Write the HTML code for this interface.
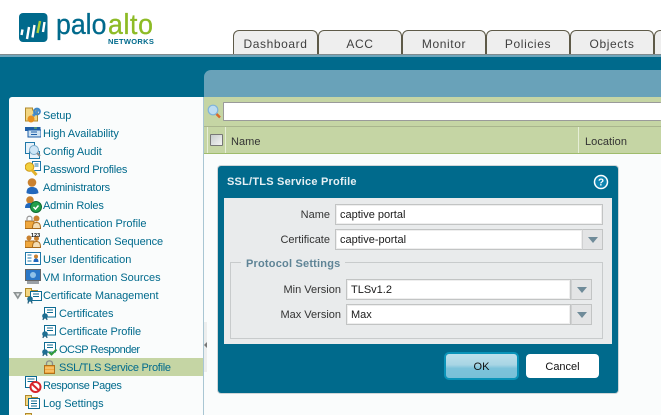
<!DOCTYPE html>
<html><head><meta charset="utf-8"><style>
html,body{margin:0;padding:0}
body{width:661px;height:415px;overflow:hidden;position:relative;background:#fff;font-family:"Liberation Sans",sans-serif}
div,span,svg{position:absolute;box-sizing:border-box}
.tab{top:30px;height:25px;width:84px;background:#eee;border:1px solid #5e5a48;border-bottom:0;border-radius:6px 6px 0 0;text-align:center;font-size:12px;line-height:27px;color:#3f3f3f;letter-spacing:.6px}
.t{font-size:11px;line-height:18px;height:18px;color:#006a8c;white-space:nowrap}
.l{font-size:11px;color:#333;text-align:right;white-space:nowrap;line-height:14px}
.in{background:#fff;border:1px solid #c2c4c4;box-shadow:inset 0 0 0 1px #eee;font-size:11px;color:#1a1a1a;padding-left:4px;white-space:nowrap}
.ar{background:#e3e4e5;border:1px solid #c2c4c4;border-left:1px solid #d0d1d2}
.ar:after{content:"";position:absolute;left:5px;top:7px;border:5px solid transparent;border-top:6px solid #6f8b99;border-bottom:0}
</style></head><body>
<!-- header -->
<svg style="left:19px;top:13px" width="29" height="30" viewBox="0 0 29 30"><rect width="28.500" height="29" rx="4" fill="#006a8c"/><g stroke-width="2.400" fill="none"><path d="M2.500 22L3.500 16.500M8 26L10 14M13.500 24.500L15.500 12" stroke="#fff"/><path d="M18.500 20L21 8" stroke="#a8cf3a"/><path d="M24 19L25.500 9" stroke="#fff"/></g></svg>
<span style="left:55.500px;top:9.500px;font-size:29px;line-height:30px;color:#006a8c;transform:scaleX(.92);transform-origin:0 0;-webkit-text-stroke:.3px #006a8c">palo</span>
<span style="left:107.500px;top:9.500px;font-size:29px;line-height:30px;color:#8dbb25;transform:scaleX(.92);transform-origin:0 0;letter-spacing:.7px;-webkit-text-stroke:.3px #8dbb25">alto</span>
<span style="left:108px;top:38px;font-size:7.500px;line-height:8px;font-weight:bold;color:#006a8c;letter-spacing:.3px">NETWORKS</span>
<div class="tab" style="left:233px;width:85px">Dashboard</div>
<div class="tab" style="left:318px">ACC</div>
<div class="tab" style="left:402px">Monitor</div>
<div class="tab" style="left:486px">Policies</div>
<div class="tab" style="left:570px">Objects</div>
<div class="tab" style="left:654px"></div>
<div style="left:0;top:54px;width:661px;height:1px;background:#7f8a8e"></div>
<div style="left:0;top:55px;width:661px;height:2px;background:#6fa5bb"></div>
<div style="left:0;top:57px;width:661px;height:358px;background:#006a8c"></div>
<!-- left panel -->
<div style="left:9px;top:97px;width:195px;height:318px;background:#fafcfc;border-radius:3px 0 0 0;border-right:1px solid #a9c6d3"></div>
<div style="left:9px;top:358px;width:194px;height:18px;background:#c5d5a4"></div>
<div style="left:204px;top:97px;width:457px;height:318px;background:#fafcfc"></div>
<div style="left:204px;top:70px;width:457px;height:27px;background:#69a2b9;border-radius:7px 0 0 0"></div>
<div style="left:204px;top:97px;width:457px;height:56px;background:#c5d5a4"></div>
<div style="left:204px;top:322px;width:3px;height:50px;background:#eceeee"></div>
<div style="left:204px;top:342px;width:0;height:0;border:3px solid transparent;border-right:3px solid #777;border-left:0"></div>
<!-- search -->
<svg style="left:207px;top:103px" width="16" height="18" viewBox="0 0 16 18"><circle cx="6" cy="7" r="4.800" fill="#bcdcf2" stroke="#7fb3da" stroke-width="1.200"/><path d="M9.500 11L13 14.500" stroke="#d9692a" stroke-width="2.500"/></svg>
<div style="left:223px;top:102px;width:438px;height:19px;background:#fff;border:1px solid #9a9a9a;border-right:0;border-radius:1px"></div>
<div style="left:204px;top:126px;width:457px;height:1px;background:#a9b58d"></div>
<div style="left:204px;top:153px;width:457px;height:1px;background:#9fbc6c"></div>
<div style="left:207px;top:127px;width:1px;height:26px;background:#e6eed6"></div>
<div style="left:225px;top:127px;width:1px;height:26px;background:#e6eed6"></div>
<div style="left:578px;top:127px;width:1px;height:26px;background:#e6eed6"></div>
<div style="left:210px;top:134px;width:13px;height:12px;background:linear-gradient(135deg,#c7cccc,#f4f4f4);border:1px solid #777;border-radius:1px"></div>
<span style="left:231px;top:135px;font-size:11px;line-height:14px;color:#333;letter-spacing:.05px">Name</span>
<span style="left:585px;top:135px;font-size:11px;line-height:14px;color:#333;letter-spacing:.05px">Location</span>
<!-- tree text -->
<span class="t" style="left:43px;top:107px;letter-spacing:-.08px">Setup</span>
<span class="t" style="left:43px;top:125px;letter-spacing:-.06px">High Availability</span>
<span class="t" style="left:43px;top:143px;letter-spacing:-.05px">Config Audit</span>
<span class="t" style="left:43px;top:161px;letter-spacing:-.23px">Password Profiles</span>
<span class="t" style="left:43px;top:179px;letter-spacing:-.24px">Administrators</span>
<span class="t" style="left:43px;top:197px;letter-spacing:-.15px">Admin Roles</span>
<span class="t" style="left:43px;top:215px;letter-spacing:-.02px">Authentication Profile</span>
<span class="t" style="left:43px;top:233px;letter-spacing:-.1px">Authentication Sequence</span>
<span class="t" style="left:43px;top:251px;letter-spacing:.02px">User Identification</span>
<span class="t" style="left:43px;top:269px;letter-spacing:-.02px">VM Information Sources</span>
<span class="t" style="left:43px;top:287px;letter-spacing:-.06px">Certificate Management</span>
<span class="t" style="left:59px;top:305px;letter-spacing:-.05px">Certificates</span>
<span class="t" style="left:59px;top:323px;letter-spacing:-.09px">Certificate Profile</span>
<span class="t" style="left:59px;top:341px;letter-spacing:-.52px">OCSP Responder</span>
<span class="t" style="left:59px;top:359px;letter-spacing:-.27px">SSL/TLS Service Profile</span>
<span class="t" style="left:43px;top:377px;letter-spacing:-.38px">Response Pages</span>
<span class="t" style="left:43px;top:395px;letter-spacing:-.05px">Log Settings</span>
<!-- tree icons -->
<svg style="left:25px;top:107px" width="16" height="16" viewBox="0 0 16 16"><path d="M.5 1h7v2h5v11H.5z" fill="#f3d682" stroke="#b08a2c"/><path d="M13 1l2 2-6 7-2-2z" fill="#4a90d0"/><circle cx="6" cy="12" r="3.500" fill="#e8901e"/><circle cx="12" cy="4.500" r="3" fill="none" stroke="#3d87c8" stroke-width="1.800"/></svg>
<svg style="left:25px;top:126px" width="16" height="12" viewBox="0 0 16 12"><rect x="0" y="1" width="15.500" height="4" fill="#1f5fa8"/><rect x="3" y="4" width="13" height="7" fill="#cfe3f2" stroke="#1f5fa8"/><path d="M6 6h6M6 8.500h6" stroke="#1f5fa8"/><path d="M9 2h3" stroke="#7ec850"/></svg>
<svg style="left:25px;top:142px" width="16" height="18" viewBox="0 0 16 18"><rect x=".5" y=".5" width="9" height="11" fill="#e8f2fa" stroke="#1f78a8"/><rect x="4.500" y="9.500" width="10" height="7" fill="#e8f2fa" stroke="#1f78a8"/><circle cx="9" cy="8" r="4.500" fill="#cfe6f6" stroke="#79a9c8"/><path d="M12 11l3 3" stroke="#8a8a8a" stroke-width="2"/></svg>
<svg style="left:25px;top:161px" width="16" height="16" viewBox="0 0 16 16"><rect x="7.500" y=".5" width="8" height="9" fill="#fff" stroke="#1f78a8"/><path d="M9.500 3h4M9.500 5h4" stroke="#1f78a8"/><circle cx="4.500" cy="6" r="4.300" fill="#f2cf3e" stroke="#cf9b1a"/><path d="M6.500 8.500l5 5.500" stroke="#e2b12a" stroke-width="3"/></svg>
<svg style="left:26px;top:178px" width="13" height="17" viewBox="0 0 13 17"><circle cx="6" cy="4.500" r="4.300" fill="#c9812f"/><path d="M.5 15c0-5 2.500-6 5.500-6s6 1 6.500 6c-2 1.500-10 1.500-12 0z" fill="#2268bd"/></svg>
<svg style="left:25px;top:196px" width="17" height="17" viewBox="0 0 17 17"><circle cx="5" cy="4" r="3.800" fill="#c9812f"/><path d="M0 12c0-4 2-5 5-5s4 2 4 5z" fill="#2268bd"/><circle cx="11" cy="11" r="5.500" fill="#22a04a" stroke="#0c6a30"/><path d="M8.500 11l2 2 3-3.500" stroke="#fff" stroke-width="1.500" fill="none"/></svg>
<svg style="left:25px;top:215px" width="16" height="14" viewBox="0 0 16 14"><rect x="0" y="6" width="9" height="7.500" fill="#f0a83e" stroke="#a8691a"/><path d="M2 6V3.500c0-3 5-3 5 0V6" fill="none" stroke="#999" stroke-width="1.200"/><circle cx="11.500" cy="3.500" r="3" fill="#c9812f"/><path d="M7.500 13.500c0-5 1.500-6 4-6s4 1 4 6z" fill="#f4ddb4" stroke="#a8691a"/></svg>
<svg style="left:25px;top:232px" width="16" height="16" viewBox="0 0 16 16"><rect x="0" y="9" width="9" height="6.500" fill="#f0a83e" stroke="#a8691a"/><circle cx="4" cy="6" r="2.500" fill="#c9812f"/><circle cx="11.500" cy="6.500" r="2.500" fill="#c9812f"/><path d="M7.500 15.500c0-5 1.500-6 4-6s4 1 4 6z" fill="#f4ddb4" stroke="#a8691a"/><text x="6" y="5" font-size="5.500" font-weight="bold" font-family="Liberation Sans" fill="#111">123</text></svg>
<svg style="left:25px;top:252px" width="16" height="14" viewBox="0 0 16 14"><rect x=".5" y=".5" width="15" height="12" fill="#fff" stroke="#1f78a8"/><path d="M2.500 3h4M2.500 6h4M2.500 9h4" stroke="#1f78a8"/><circle cx="11" cy="4.500" r="2" fill="#c9812f"/><path d="M8.500 10c0-3 1-3.500 2.500-3.500s2.500.5 2.500 3.500z" fill="#2268bd"/></svg>
<svg style="left:25px;top:269px" width="16" height="16" viewBox="0 0 16 16"><rect x=".5" y=".5" width="15" height="11" fill="#2a78c8" stroke="#666"/><circle cx="8" cy="6" r="3" fill="#8fc2e8"/><rect x="2" y="12" width="12" height="3" fill="#9aa0a6"/></svg>
<svg style="left:13px;top:292px" width="10" height="8" viewBox="0 0 10 8"><path d="M0 0h9.500L4.800 7.500z" fill="#8d9494"/><path d="M3 1.500h3.500L4.800 4.500z" fill="#e6e8e8"/></svg>
<svg style="left:25px;top:287px" width="17" height="17" viewBox="0 0 17 17"><path d="M.5 1.500h6v2h6v6H.5z" fill="#f3d682" stroke="#b08a2c"/><rect x="5.500" y="4.500" width="11" height="9" fill="#fff" stroke="#0d6b92"/><path d="M8 7h6M8 9.500h6" stroke="#0d6b92"/><circle cx="5" cy="12" r="2.800" fill="#1f6f92"/><path d="M3.500 14l-.5 2.500M6.500 14l.5 2.500" stroke="#1d5a78" stroke-width="1.200"/></svg>
<svg style="left:42px;top:307px" width="14" height="16" viewBox="0 0 14 16"><rect x="2.500" y=".5" width="11" height="9.500" fill="#fff" stroke="#0d6b92"/><path d="M5 3h6M5 5.500h6" stroke="#0d6b92"/><circle cx="3" cy="9" r="2.800" fill="#1f6f92"/><path d="M1.500 11l-.5 2M4.500 11l.5 2" stroke="#1d5a78" stroke-width="1.200"/></svg>
<svg style="left:42px;top:325px" width="14" height="16" viewBox="0 0 14 16"><rect x="2.500" y=".5" width="11" height="9.500" fill="#fff" stroke="#0d6b92"/><path d="M5 3h6M5 5.500h6" stroke="#0d6b92"/><circle cx="3" cy="9" r="2.800" fill="#1f6f92"/><path d="M1.500 11l-.5 2M4.500 11l.5 2" stroke="#1d5a78" stroke-width="1.200"/></svg>
<svg style="left:42px;top:342px" width="16" height="16" viewBox="0 0 16 16"><rect x="2.500" y=".5" width="11" height="9.500" fill="#fff" stroke="#0d6b92"/><path d="M5 3h6M5 5.500h6" stroke="#0d6b92"/><circle cx="3" cy="10" r="2.800" fill="#1f6f92"/><path d="M1.500 12l-.5 2M4.500 12l.5 2" stroke="#1d5a78" stroke-width="1.200"/><path d="M7 10l2.500 2.500 5-5" stroke="#2f9a3a" stroke-width="2" fill="none"/></svg>
<svg style="left:44px;top:360px" width="11" height="14" viewBox="0 0 11 14"><path d="M2.500 6V3.500c0-3.500 6-3.500 6 0V6" fill="none" stroke="#8a8a8a" stroke-width="1.300"/><rect x=".5" y="5.500" width="10" height="8" fill="#f0a83e" stroke="#b0701c"/><path d="M1 8h9M1 11h9" stroke="#fbd68e"/></svg>
<svg style="left:25px;top:376px" width="17" height="18" viewBox="0 0 17 18"><rect x=".5" y=".5" width="11" height="11" fill="#fff" stroke="#0d6b92"/><path d="M2.500 3h7M2.500 5.500h7" stroke="#0d6b92"/><circle cx="10.500" cy="11" r="5" fill="#fff" stroke="#d8252a" stroke-width="2"/><path d="M7 8l7 6.500" stroke="#d8252a" stroke-width="2"/></svg>
<svg style="left:25px;top:394px" width="16" height="16" viewBox="0 0 16 16"><path d="M.5 1.500h6v2h6v8H.5z" fill="#f3d682" stroke="#b08a2c"/><rect x="3.500" y="4.500" width="11" height="10" fill="#fff" stroke="#0d6b92"/><path d="M6 7h6M6 9.500h6M6 12h6" stroke="#0d6b92"/></svg>
<svg style="left:25px;top:412px" width="16" height="3" viewBox="0 0 16 3"><path d="M.5 1.500h6v2H.5z" fill="#f3d682" stroke="#b08a2c"/></svg>
<!-- dialog -->
<div style="left:218px;top:166px;width:400px;height:227px;background:#006a8c;border-radius:3px;box-shadow:0 0 0 1px #cfd6d8"></div>
<span style="left:227px;top:175px;font-size:11px;line-height:14px;font-weight:bold;color:#e6f0f4;letter-spacing:.22px">SSL/TLS Service Profile</span>
<svg style="left:593px;top:174px" width="16" height="16" viewBox="0 0 16 16"><circle cx="8" cy="8" r="6.500" fill="#0f85b0" stroke="#fff" stroke-width="1.500"/><text x="8" y="11.500" text-anchor="middle" font-size="10" font-weight="bold" font-family="Liberation Sans" fill="#fff">?</text></svg>
<div style="left:224px;top:198px;width:388px;height:146px;background:#e9ebec"></div>
<span class="l" style="left:260px;width:70px;top:208px">Name</span>
<div class="in" style="left:335px;top:204px;width:268px;height:21px;line-height:21px">captive portal</div>
<span class="l" style="left:260px;width:70px;top:233px">Certificate</span>
<div class="in" style="left:335px;top:229px;width:248px;height:21px;line-height:21px">captive-portal</div>
<div class="ar" style="left:582px;top:229px;width:21px;height:21px"></div>
<div style="left:230px;top:262px;width:373px;height:77px;border:1px solid #c8cbcc"></div>
<span style="left:241px;top:257px;padding:0 5px;background:#e9ebec;font-size:11px;line-height:14px;font-weight:bold;color:#5f8496;letter-spacing:.2px">Protocol Settings</span>
<span class="l" style="left:261px;width:80px;top:283px">Min Version</span>
<div class="in" style="left:346px;top:279px;width:225px;height:21px;line-height:21px">TLSv1.2</div>
<div class="ar" style="left:571px;top:279px;width:21px;height:21px"></div>
<span class="l" style="left:261px;width:80px;top:308px">Max Version</span>
<div class="in" style="left:346px;top:304px;width:225px;height:21px;line-height:21px">Max</div>
<div class="ar" style="left:571px;top:304px;width:21px;height:21px"></div>
<div style="left:444px;top:352px;width:75px;height:28px;border:2px solid #0a93b8;border-radius:5px;background:linear-gradient(#bcdfeb,#a8d5e4 45%,#7cc3da 60%,#78c0d8);font-size:11px;line-height:26px;text-align:center;color:#111">OK</div>
<div style="left:526px;top:354px;width:73px;height:24px;background:#fff;border-radius:4px;font-size:11px;line-height:26px;text-align:center;color:#111">Cancel</div>
</body></html>
